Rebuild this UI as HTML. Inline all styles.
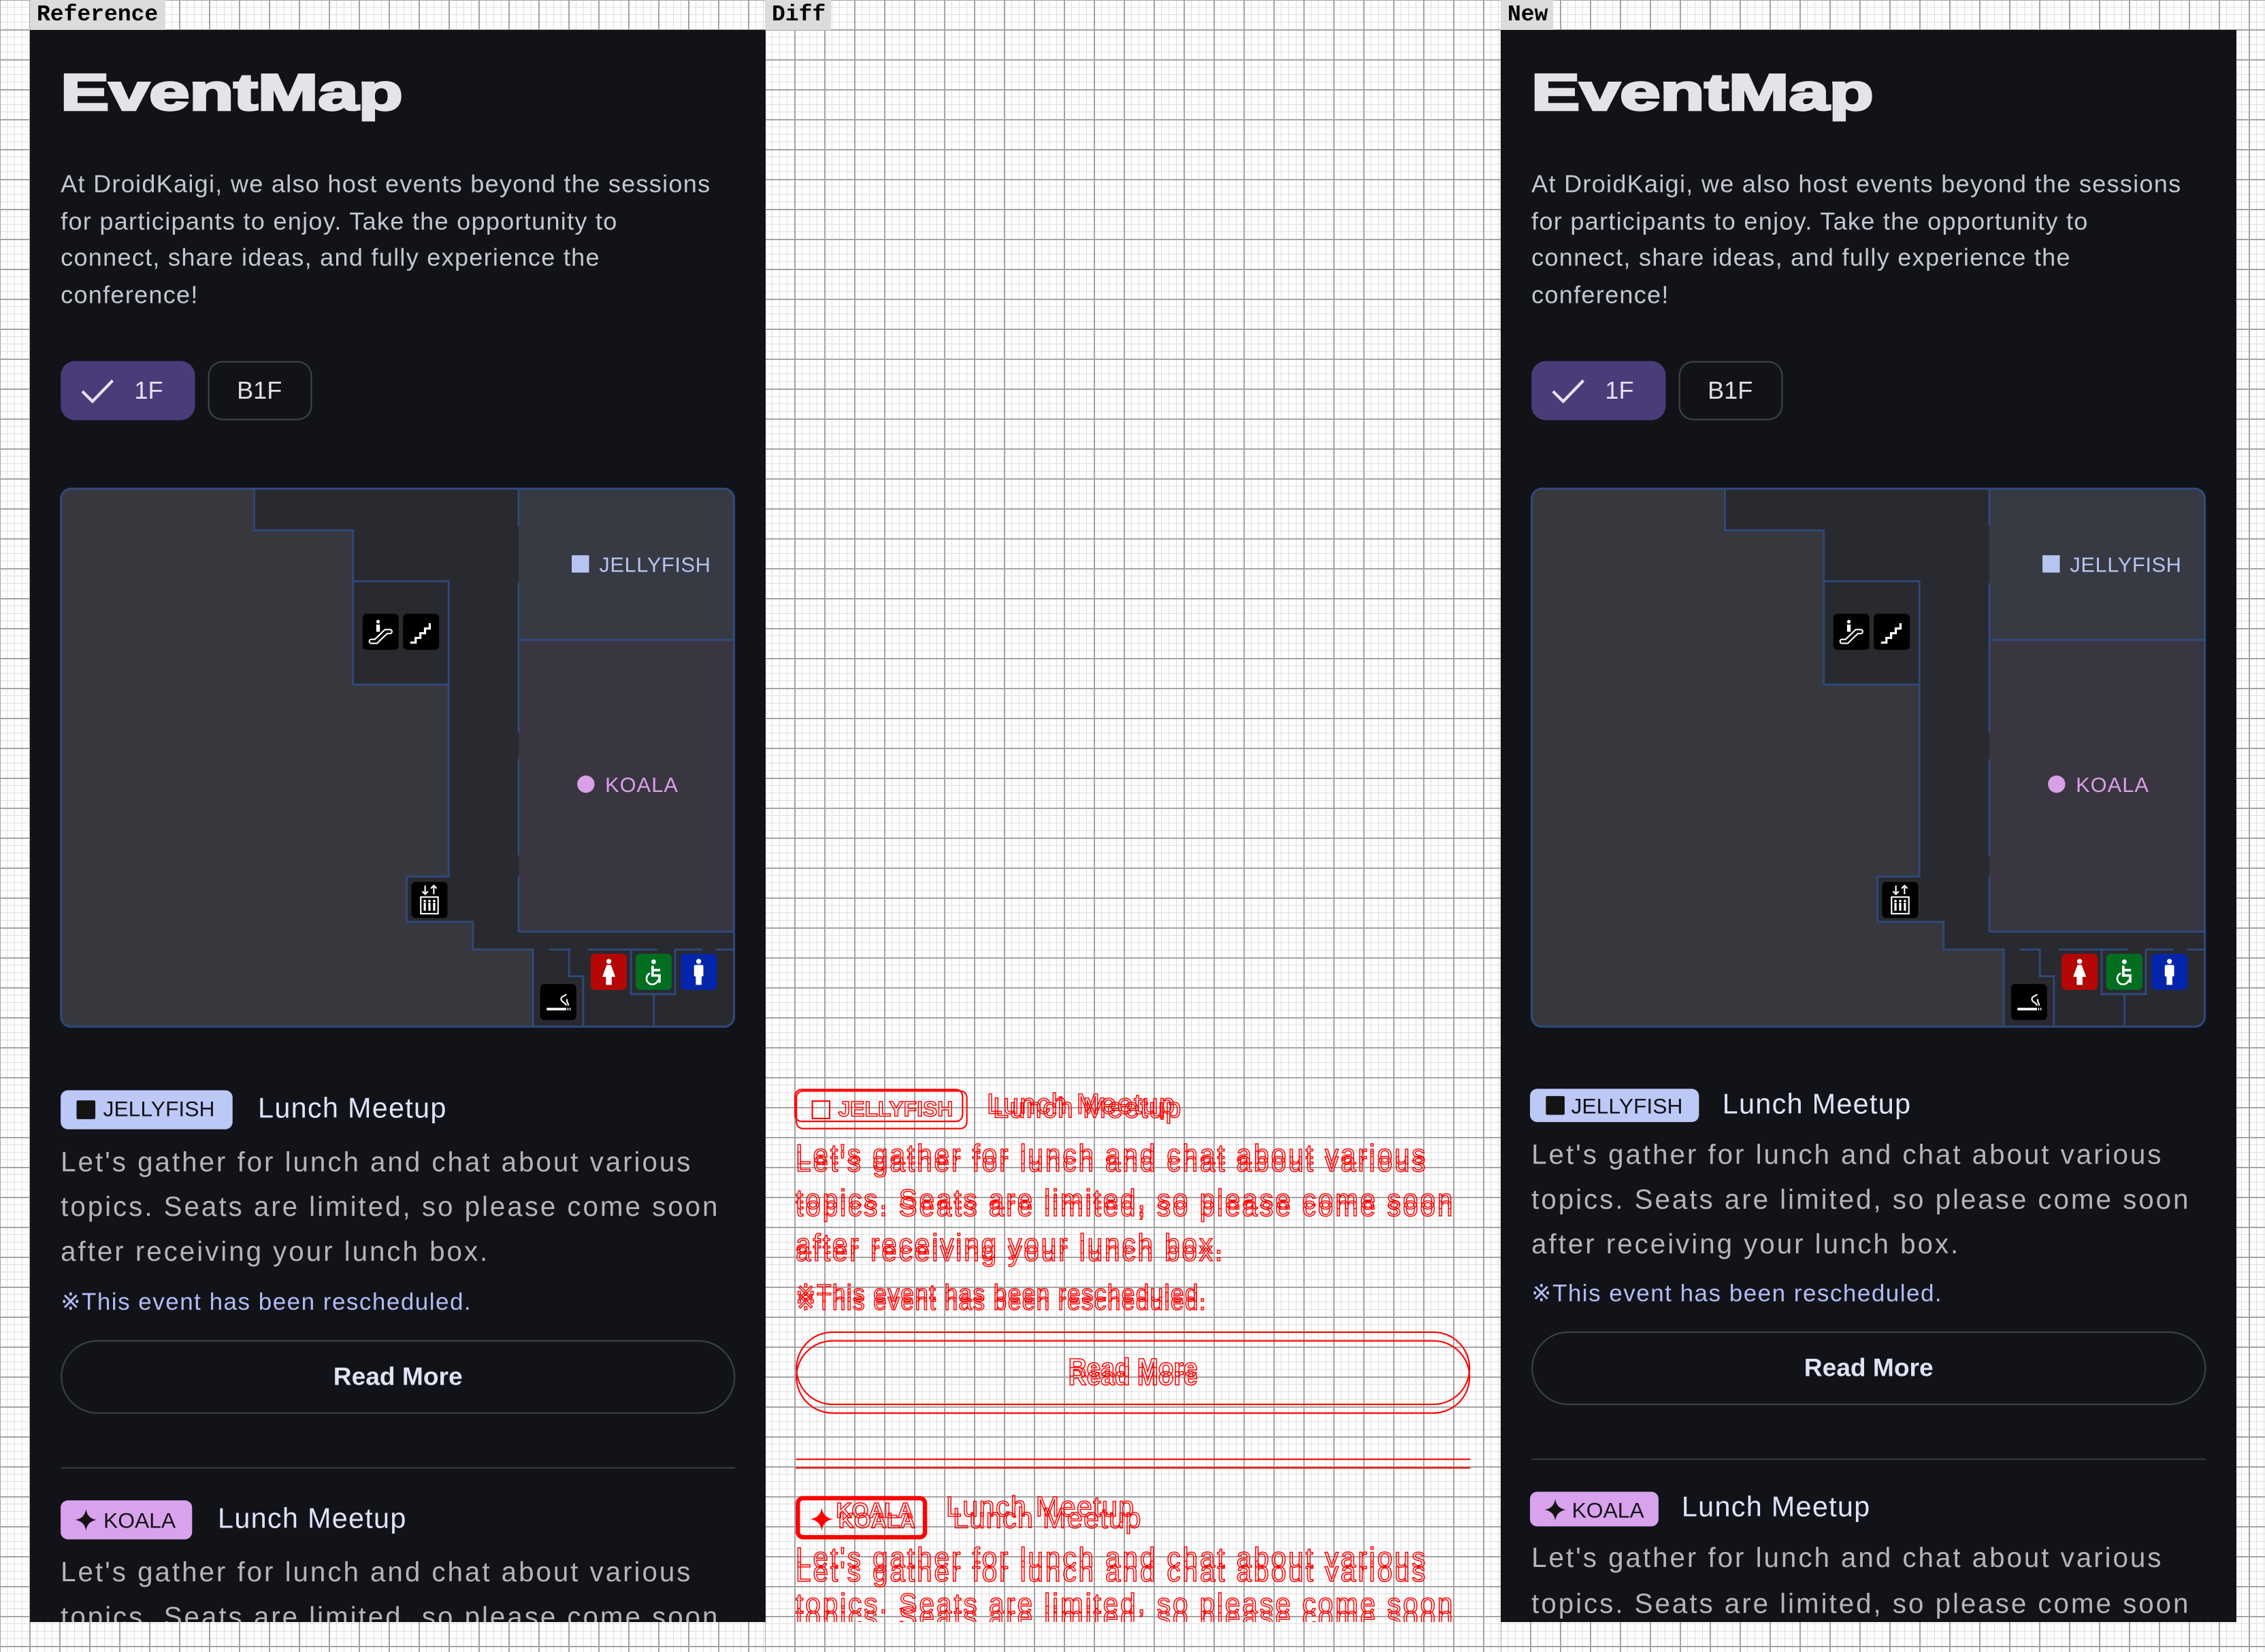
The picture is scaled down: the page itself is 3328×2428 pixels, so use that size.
<!DOCTYPE html>
<html><head><meta charset="utf-8"><style>
*{margin:0;padding:0;box-sizing:border-box}
html,body{width:3328px;height:2428px;overflow:hidden;background:#fff}
.grid{position:absolute;top:0;height:2428px;
background-image:linear-gradient(to right,#a4a4a4 2px,transparent 2px),linear-gradient(to bottom,#a4a4a4 2px,transparent 2px),linear-gradient(to right,#dedede 1px,transparent 1px),linear-gradient(to bottom,#dedede 1px,transparent 1px);
background-size:44px 44px,44px 44px,11px 11px,11px 11px;background-position:-1px -1px}
.lab{position:absolute;top:0;height:44px;background:#dcdcdc;font:bold 33px "Liberation Mono",monospace;color:#000;padding:3px 0 0 10px;line-height:38px}
.panel{position:absolute;top:44px;width:1081px;height:2340px;overflow:hidden}
.dark{background:#121318}
.c{position:absolute;left:0;top:0;width:600px;height:1200px;transform:scale(2.1224) translate(-20.73px,-20.73px);transform-origin:0 0;font-family:"Liberation Sans",sans-serif}
.t{position:absolute;white-space:nowrap;line-height:1}
.p{font-size:17px;color:#c5c7ce;letter-spacing:0.6px}
.ds{font-size:19px;color:#b4b4b9;letter-spacing:1.4px}
.lm{font-size:19.5px;color:#dfe3fb;letter-spacing:0.6px}
.rs{font-size:16.5px;color:#b0bcf5;letter-spacing:0.7px}
.chip{position:absolute;border-radius:5px}
.d .t{color:transparent!important;-webkit-text-stroke:0.7px #f00}
.d .chip{background:transparent!important;border:1.2px solid #f00}
.d .sq{background:transparent!important;border:1.2px solid #f00}
.d .btn{border-color:#f00!important}
.d .div{background:#f00!important}
</style></head><body>
<div class="grid" style="left:0;width:1124px"></div>
<div class="grid" style="left:1124px;width:1081px"></div>
<div class="grid" style="left:2205px;width:1123px"></div>
<div class="lab" style="left:44px;width:199px">Reference</div>
<div class="lab" style="left:1124px;width:97px">Diff</div>
<div class="lab" style="left:2205px;width:77px">New</div>

<!-- REFERENCE -->
<div class="panel dark" style="left:44px"><div class="c">
<div class="t" style="left:42px;top:46.9px;font-size:35.3px;font-weight:bold;color:#e3e3e8;-webkit-text-stroke:1.6px #e3e3e8;transform:scaleX(1.42);transform-origin:0 0">EventMap</div>
<div class="t p" style="left:42px;top:119.2px">At DroidKaigi, we also host events beyond the sessions</div>
<div class="t p" style="left:42px;top:144.8px">for participants to enjoy. Take the opportunity to</div>
<div class="t p" style="left:42px;top:170.4px">connect, share ideas, and fully experience the</div>
<div class="t p" style="left:42px;top:196px">conference!</div>
<div style="position:absolute;left:41.5px;top:249.8px;width:93.3px;height:41px;border-radius:10px;background:#4a3c78"></div>
<svg style="position:absolute;left:0;top:0" width="600" height="1200" viewBox="0 0 600 1200"><path d="M57,271 L64,278 L78,263.5" stroke="#e8e0fb" stroke-width="2" fill="none"/></svg>
<div class="t" style="left:93px;top:262px;font-size:17px;color:#e6e0f8">1F</div>
<div style="position:absolute;left:143.8px;top:249.8px;width:72.6px;height:41px;border-radius:10px;border:1.2px solid #3f4448"></div>
<div class="t" style="left:164px;top:262px;font-size:17px;color:#dfe1e6">B1F</div>

<svg style="position:absolute;left:0;top:0" width="600" height="1200" viewBox="0 0 600 1200">
<defs><clipPath id="mc"><rect x="42.2" y="338.4" width="466" height="372.6" rx="7"/></clipPath></defs>
<g clip-path="url(#mc)">
<rect x="42" y="338" width="468" height="374" fill="#292a2f"/>
<path d="M42,338 H176 V367.3 H244.4 V474 H310.6 V607 H281.6 V638.3 H327.4 V657.5 H369 V711 H42 Z" fill="#37383e"/>
<rect x="359" y="338" width="150" height="105" fill="#373a43"/>
<rect x="359" y="443.1" width="150" height="202" fill="#3a3641"/>
<g stroke="#2e4a7e" stroke-width="1.3" fill="none">
<path d="M176,338 V367.3 H244.4 V402.5 H310.6 V607 H281.6 V638.3 H327.4 V657.5 H369 V711"/>
<path d="M244.4,402.5 V474 H310.6"/>
<path d="M359,338 V364.3 M359,403.7 V507.2 M359,525.7 V592.2 M359,607 V645.2"/>
<path d="M359,443.1 H508 M359,645.2 H508"/>
<path d="M380,657.5 H394 V676 H403.7 V711 M406.9,657.5 H454.9 M467.4,657.5 H486.4 M495.8,657.5 H508"/>
<path d="M436.8,657.5 V688.4 H467.4 V657.5 M452.6,688.4 V711"/>
</g>
</g>
<rect x="42.2" y="338.4" width="466" height="372.6" rx="7" fill="none" stroke="#2e4a7e" stroke-width="1.4"/>
<rect x="395.8" y="384.5" width="12" height="12" fill="#b8c4f0"/>
<text x="414.8" y="396" font-family="Liberation Sans" font-size="14.5" fill="#b8c4f0" letter-spacing="0.3">JELLYFISH</text>
<circle cx="405.6" cy="543" r="6" fill="#d9a0e8"/>
<text x="418.9" y="548.5" font-family="Liberation Sans" font-size="14.5" fill="#d9a0e8" letter-spacing="0.5">KOALA</text>
<g transform="translate(251,425) scale(0.25)"><rect width="100" height="100" rx="12" fill="#000"/>
<circle cx="43" cy="22" r="5" fill="#fff"/><rect x="38" y="30" width="10" height="20" fill="#fff"/>
<path d="M24,82 c-7,0 -7,-11 0,-11 H34 L62,44 H76 c7,0 7,11 0,11 H68 L40,82 Z" stroke="#fff" stroke-width="4" fill="none"/></g>
<g transform="translate(279,425) scale(0.25)"><rect width="100" height="100" rx="12" fill="#000"/>
<path d="M20,80 H35 V67 H48 V54 H61 V41 H74 V26" stroke="#fff" stroke-width="6" fill="none"/></g>
<g transform="translate(284.8,610.7) scale(0.25)"><rect width="100" height="100" rx="12" fill="#000"/>
<path d="M38,10 V34 M30,26 L38,34 L46,26 M62,34 V10 M54,18 L62,10 L70,18" stroke="#fff" stroke-width="4" fill="none"/>
<rect x="26" y="42" width="48" height="46" stroke="#fff" stroke-width="4" fill="none"/>
<g fill="#fff"><circle cx="37" cy="53" r="3.5"/><rect x="34" y="58" width="6" height="22"/><circle cx="50" cy="53" r="3.5"/><rect x="47" y="58" width="6" height="22"/><circle cx="63" cy="53" r="3.5"/><rect x="60" y="58" width="6" height="22"/></g></g>
<g transform="translate(374,681.4) scale(0.25)"><rect width="100" height="100" rx="12" fill="#000"/>
<rect x="18" y="66" width="54" height="7" fill="#fff"/><rect x="75" y="66" width="3" height="7" fill="#fff"/><rect x="81" y="66" width="3" height="7" fill="#fff"/>
<path d="M72,60 c0,-8 -16,-10 -14,-20 c2,-8 12,-6 14,-12 M78,60 c0,-8 -6,-10 -4,-18" stroke="#fff" stroke-width="4" fill="none"/></g>
<g transform="translate(409,660.5) scale(0.25)"><rect width="100" height="100" rx="12" fill="#b50606"/>
<circle cx="50" cy="21" r="7" fill="#fff"/><path d="M44,31 H56 L68,64 H58 V86 H42 V64 H32 Z" fill="#fff"/></g>
<g transform="translate(440,660.5) scale(0.25)"><rect width="100" height="100" rx="12" fill="#026f20"/>
<circle cx="50" cy="22" r="6.5" fill="#fff"/>
<path d="M47,33 V60 H66 V80 M48,45 H68" stroke="#fff" stroke-width="7" fill="none"/>
<path d="M40,54 A16,16 0 1 0 62,72" stroke="#fff" stroke-width="5" fill="none"/></g>
<g transform="translate(471.2,660.5) scale(0.25)"><rect width="100" height="100" rx="12" fill="#0326ad"/>
<circle cx="50" cy="21" r="7" fill="#fff"/><rect x="37" y="31" width="26" height="32" rx="4" fill="#fff"/><rect x="42" y="58" width="16" height="28" fill="#fff"/></g>
</svg>

<div class="chip" style="left:42.2px;top:754.8px;width:119px;height:26.9px;background:#bcc8f6"></div>
<div class="sq" style="position:absolute;left:53.1px;top:761.7px;width:13px;height:13px;background:#141414;border-radius:1px"></div>
<div class="t" style="left:71.4px;top:761.3px;font-size:15px;color:#131318">JELLYFISH</div>
<div class="t lm" style="left:178.6px;top:758.5px">Lunch Meetup</div>
<div class="t ds" style="left:42px;top:796.2px">Let's gather for lunch and chat about various</div>
<div class="t ds" style="left:42px;top:827.2px">topics. Seats are limited, so please come soon</div>
<div class="t ds" style="left:42px;top:858.2px">after receiving your lunch box.</div>
<div class="t rs" style="left:42px;top:893.5px">※This event has been rescheduled.</div>
<div class="btn" style="position:absolute;left:42px;top:928px;width:467px;height:51px;border-radius:26px;border:1.3px solid #3c4146"></div>
<div class="t" style="left:42px;width:467px;text-align:center;top:944.5px;font-size:17.5px;font-weight:bold;color:#e0e3f5">Read More</div>
<div class="div" style="position:absolute;left:42px;top:1015.5px;width:467px;height:1.2px;background:#363a3f"></div>
<div class="chip" style="left:42.4px;top:1038.5px;width:90.6px;height:27.5px;background:#d9a2ec"></div>
<svg style="position:absolute;left:52.3px;top:1045px" width="15" height="15" viewBox="0 0 10 10"><path d="M5,0 Q5.6,4.4 10,5 Q5.6,5.6 5,10 Q4.4,5.6 0,5 Q4.4,4.4 5,0Z" fill="#141414"/></svg>
<div class="t" style="left:71.6px;top:1046.3px;font-size:15px;color:#131318">KOALA</div>
<div class="t lm" style="left:150.8px;top:1043.2px">Lunch Meetup</div>
<div class="t ds" style="left:42px;top:1080.3px">Let's gather for lunch and chat about various</div>
<div class="t ds" style="left:42px;top:1111.3px">topics. Seats are limited, so please come soon</div>
</div></div>

<!-- DIFF -->
<div class="panel d" style="left:1124px"><div class="c">
<div class="chip" style="left:42.2px;top:754.8px;width:119px;height:26.9px"></div>
<div class="sq" style="position:absolute;left:53.1px;top:761.7px;width:13px;height:13px"></div>
<div class="t" style="left:71.4px;top:761.3px;font-size:15px;font-weight:bold">JELLYFISH</div>
<div class="t lm" style="left:178.6px;top:758.5px">Lunch Meetup</div>
<div class="t ds" style="left:42px;top:796.2px">Let's gather for lunch and chat about various</div>
<div class="t ds" style="left:42px;top:827.2px">topics. Seats are limited, so please come soon</div>
<div class="t ds" style="left:42px;top:858.2px">after receiving your lunch box.</div>
<div class="t rs" style="left:42px;top:893.5px">※This event has been rescheduled.</div>
<div class="btn" style="position:absolute;left:42px;top:928px;width:467px;height:51px;border-radius:26px;border:1.3px solid"></div>
<div class="t" style="left:42px;width:467px;text-align:center;top:944.5px;font-size:17.5px;font-weight:bold">Read More</div>
<div class="div" style="position:absolute;left:42px;top:1015.5px;width:467px;height:1.2px"></div>
<div class="chip" style="left:42.4px;top:1036px;width:90.6px;height:30px;border-width:3px"></div>
<svg style="position:absolute;left:52.3px;top:1043px" width="16" height="18" viewBox="0 0 10 10"><path d="M5,0 Q5.6,4.4 10,5 Q5.6,5.6 5,10 Q4.4,5.6 0,5 Q4.4,4.4 5,0Z" fill="#f00"/></svg>
<div class="t" style="left:71.6px;top:1046.3px;font-size:15px;font-weight:bold">KOALA</div>
<div class="t lm" style="left:150.8px;top:1043.2px">Lunch Meetup</div>
<div class="t ds" style="left:42px;top:1080.3px">Let's gather for lunch and chat about various</div>
<div class="t ds" style="left:42px;top:1111.3px">topics. Seats are limited, so please come soon</div>

<div class="chip" style="left:41px;top:753.8px;width:116.7px;height:23.7px"></div>
<div class="t lm" style="left:174.2px;top:756.4px">Lunch Meetup</div>
<div class="t ds" style="left:42px;top:790.6px">Let's gather for lunch and chat about various</div>
<div class="t ds" style="left:42px;top:821.9px">topics. Seats are limited, so please come soon</div>
<div class="t ds" style="left:42px;top:853.2px">after receiving your lunch box.</div>
<div class="t rs" style="left:42px;top:888px">※This event has been rescheduled.</div>
<div class="btn" style="position:absolute;left:42px;top:922.3px;width:467px;height:51px;border-radius:26px;border:1.3px solid"></div>
<div class="t" style="left:42px;width:467px;text-align:center;top:939px;font-size:17.5px;font-weight:bold">Read More</div>
<div class="div" style="position:absolute;left:42px;top:1010px;width:467px;height:1.2px"></div>
<div class="t" style="left:70px;top:1038.5px;font-size:15px;font-weight:bold">KOALA</div>
<div class="t lm" style="left:146px;top:1034.9px">Lunch Meetup</div>
<div class="t ds" style="left:42px;top:1070.2px">Let's gather for lunch and chat about various</div>
<div class="t ds" style="left:42px;top:1101.5px">topics. Seats are limited, so please come soon</div>
</div></div>

<!-- NEW -->
<div class="panel dark" style="left:2205px"><div class="c">
<div class="t" style="left:42px;top:46.9px;font-size:35.3px;font-weight:bold;color:#e3e3e8;-webkit-text-stroke:1.6px #e3e3e8;transform:scaleX(1.42);transform-origin:0 0">EventMap</div>
<div class="t p" style="left:42px;top:119.2px">At DroidKaigi, we also host events beyond the sessions</div>
<div class="t p" style="left:42px;top:144.8px">for participants to enjoy. Take the opportunity to</div>
<div class="t p" style="left:42px;top:170.4px">connect, share ideas, and fully experience the</div>
<div class="t p" style="left:42px;top:196px">conference!</div>
<div style="position:absolute;left:41.5px;top:249.8px;width:93.3px;height:41px;border-radius:10px;background:#4a3c78"></div>
<svg style="position:absolute;left:0;top:0" width="600" height="1200" viewBox="0 0 600 1200"><path d="M57,271 L64,278 L78,263.5" stroke="#e8e0fb" stroke-width="2" fill="none"/></svg>
<div class="t" style="left:93px;top:262px;font-size:17px;color:#e6e0f8">1F</div>
<div style="position:absolute;left:143.8px;top:249.8px;width:72.6px;height:41px;border-radius:10px;border:1.2px solid #3f4448"></div>
<div class="t" style="left:164px;top:262px;font-size:17px;color:#dfe1e6">B1F</div>

<svg style="position:absolute;left:0;top:0" width="600" height="1200" viewBox="0 0 600 1200">
<defs><clipPath id="mc2"><rect x="42.2" y="338.4" width="466" height="372.6" rx="7"/></clipPath></defs>
<g clip-path="url(#mc2)">
<rect x="42" y="338" width="468" height="374" fill="#292a2f"/>
<path d="M42,338 H176 V367.3 H244.4 V474 H310.6 V607 H281.6 V638.3 H327.4 V657.5 H369 V711 H42 Z" fill="#37383e"/>
<rect x="359" y="338" width="150" height="105" fill="#373a43"/>
<rect x="359" y="443.1" width="150" height="202" fill="#3a3641"/>
<g stroke="#2e4a7e" stroke-width="1.3" fill="none">
<path d="M176,338 V367.3 H244.4 V402.5 H310.6 V607 H281.6 V638.3 H327.4 V657.5 H369 V711"/>
<path d="M244.4,402.5 V474 H310.6"/>
<path d="M359,338 V364.3 M359,403.7 V507.2 M359,525.7 V592.2 M359,607 V645.2"/>
<path d="M359,443.1 H508 M359,645.2 H508"/>
<path d="M380,657.5 H394 V676 H403.7 V711 M406.9,657.5 H454.9 M467.4,657.5 H486.4 M495.8,657.5 H508"/>
<path d="M436.8,657.5 V688.4 H467.4 V657.5 M452.6,688.4 V711"/>
</g>
</g>
<rect x="42.2" y="338.4" width="466" height="372.6" rx="7" fill="none" stroke="#2e4a7e" stroke-width="1.4"/>
<rect x="395.8" y="384.5" width="12" height="12" fill="#b8c4f0"/>
<text x="414.8" y="396" font-family="Liberation Sans" font-size="14.5" fill="#b8c4f0" letter-spacing="0.3">JELLYFISH</text>
<circle cx="405.6" cy="543" r="6" fill="#d9a0e8"/>
<text x="418.9" y="548.5" font-family="Liberation Sans" font-size="14.5" fill="#d9a0e8" letter-spacing="0.5">KOALA</text>
<g transform="translate(251,425) scale(0.25)"><rect width="100" height="100" rx="12" fill="#000"/>
<circle cx="43" cy="22" r="5" fill="#fff"/><rect x="38" y="30" width="10" height="20" fill="#fff"/>
<path d="M24,82 c-7,0 -7,-11 0,-11 H34 L62,44 H76 c7,0 7,11 0,11 H68 L40,82 Z" stroke="#fff" stroke-width="4" fill="none"/></g>
<g transform="translate(279,425) scale(0.25)"><rect width="100" height="100" rx="12" fill="#000"/>
<path d="M20,80 H35 V67 H48 V54 H61 V41 H74 V26" stroke="#fff" stroke-width="6" fill="none"/></g>
<g transform="translate(284.8,610.7) scale(0.25)"><rect width="100" height="100" rx="12" fill="#000"/>
<path d="M38,10 V34 M30,26 L38,34 L46,26 M62,34 V10 M54,18 L62,10 L70,18" stroke="#fff" stroke-width="4" fill="none"/>
<rect x="26" y="42" width="48" height="46" stroke="#fff" stroke-width="4" fill="none"/>
<g fill="#fff"><circle cx="37" cy="53" r="3.5"/><rect x="34" y="58" width="6" height="22"/><circle cx="50" cy="53" r="3.5"/><rect x="47" y="58" width="6" height="22"/><circle cx="63" cy="53" r="3.5"/><rect x="60" y="58" width="6" height="22"/></g></g>
<g transform="translate(374,681.4) scale(0.25)"><rect width="100" height="100" rx="12" fill="#000"/>
<rect x="18" y="66" width="54" height="7" fill="#fff"/><rect x="75" y="66" width="3" height="7" fill="#fff"/><rect x="81" y="66" width="3" height="7" fill="#fff"/>
<path d="M72,60 c0,-8 -16,-10 -14,-20 c2,-8 12,-6 14,-12 M78,60 c0,-8 -6,-10 -4,-18" stroke="#fff" stroke-width="4" fill="none"/></g>
<g transform="translate(409,660.5) scale(0.25)"><rect width="100" height="100" rx="12" fill="#b50606"/>
<circle cx="50" cy="21" r="7" fill="#fff"/><path d="M44,31 H56 L68,64 H58 V86 H42 V64 H32 Z" fill="#fff"/></g>
<g transform="translate(440,660.5) scale(0.25)"><rect width="100" height="100" rx="12" fill="#026f20"/>
<circle cx="50" cy="22" r="6.5" fill="#fff"/>
<path d="M47,33 V60 H66 V80 M48,45 H68" stroke="#fff" stroke-width="7" fill="none"/>
<path d="M40,54 A16,16 0 1 0 62,72" stroke="#fff" stroke-width="5" fill="none"/></g>
<g transform="translate(471.2,660.5) scale(0.25)"><rect width="100" height="100" rx="12" fill="#0326ad"/>
<circle cx="50" cy="21" r="7" fill="#fff"/><rect x="37" y="31" width="26" height="32" rx="4" fill="#fff"/><rect x="42" y="58" width="16" height="28" fill="#fff"/></g>
</svg>

<div class="chip" style="left:41px;top:753.8px;width:116.7px;height:23.7px;background:#bcc8f6"></div>
<div style="position:absolute;left:51.5px;top:759px;width:13px;height:13px;background:#141414;border-radius:1px"></div>
<div class="t" style="left:69.5px;top:759px;font-size:15px;color:#131318">JELLYFISH</div>
<div class="t lm" style="left:174.2px;top:756.4px">Lunch Meetup</div>
<div class="t ds" style="left:42px;top:790.6px">Let's gather for lunch and chat about various</div>
<div class="t ds" style="left:42px;top:821.9px">topics. Seats are limited, so please come soon</div>
<div class="t ds" style="left:42px;top:853.2px">after receiving your lunch box.</div>
<div class="t rs" style="left:42px;top:888px">※This event has been rescheduled.</div>
<div style="position:absolute;left:42px;top:922.3px;width:467px;height:51px;border-radius:26px;border:1.3px solid #3c4146"></div>
<div class="t" style="left:42px;width:467px;text-align:center;top:939px;font-size:17.5px;font-weight:bold;color:#e0e3f5">Read More</div>
<div style="position:absolute;left:42px;top:1010px;width:467px;height:1.2px;background:#363a3f"></div>
<div class="chip" style="left:41px;top:1032.8px;width:89.2px;height:23.8px;background:#d9a2ec"></div>
<svg style="position:absolute;left:51px;top:1037.5px" width="15" height="15" viewBox="0 0 10 10"><path d="M5,0 Q5.6,4.4 10,5 Q5.6,5.6 5,10 Q4.4,5.6 0,5 Q4.4,4.4 5,0Z" fill="#141414"/></svg>
<div class="t" style="left:70px;top:1038.5px;font-size:15px;color:#131318">KOALA</div>
<div class="t lm" style="left:146px;top:1034.9px">Lunch Meetup</div>
<div class="t ds" style="left:42px;top:1070.2px">Let's gather for lunch and chat about various</div>
<div class="t ds" style="left:42px;top:1101.5px">topics. Seats are limited, so please come soon</div>
</div></div>
</body></html>
